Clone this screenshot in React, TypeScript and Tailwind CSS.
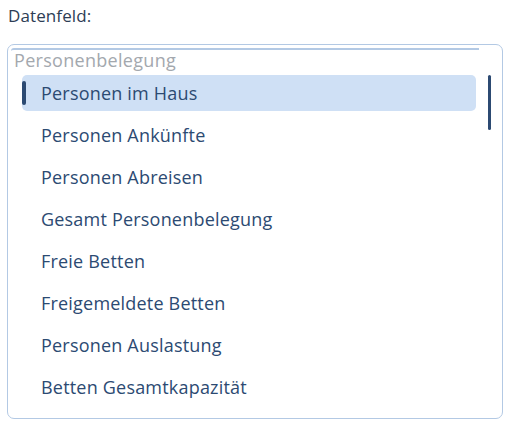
import React, { useState } from 'react';

const fields = [
  'Personen im Haus',
  'Personen Ankünfte',
  'Personen Abreisen',
  'Gesamt Personenbelegung',
  'Freie Betten',
  'Freigemeldete Betten',
  'Personen Auslastung',
  'Betten Gesamtkapazität',
];

const App: React.FC = () => {
  const [selected, setSelected] = useState<string>(fields[0]);

  return (
    <div className="w-[510px] h-[425px] bg-white pt-[4px] pl-[7px] font-['Open_Sans',sans-serif] text-[#2c4a72]">
      <div className="text-[17px] leading-[24px] pl-[1px] tracking-[0.1px] text-[#2d3d55]">Datenfeld:</div>

      {/* List box */}
      <div className="relative mt-[16px] w-[496px] h-[375px] border border-[#b3c9e4] rounded-[7px] pl-[3px] pt-[3px] overflow-hidden">
        <div className="w-[468px] border-t-2 border-[#b3c9e4] rounded-tl-[3px]">
          <div className="pl-[3px] text-[18px] leading-[20px] tracking-[0.3px] text-[#a3a8ae]">Personenbelegung</div>
          <div className="flex flex-col gap-[6px] pl-[11px] pt-[5px]">
            {fields.map((field) => {
              const active = field === selected;
              return (
                <button
                  key={field}
                  onClick={() => setSelected(field)}
                  className={`relative flex items-center w-[454px] h-[36px] rounded-[5px] pl-[19px] text-left text-[18px] tracking-[0.2px] ${
                    active ? 'bg-[#cfe0f5]' : 'bg-transparent'
                  }`}
                >
                  {active && (
                    <span className="absolute left-0 top-[6px] w-[4px] h-[24px] rounded-[2px] bg-[#2c4a72]" />
                  )}
                  {field}
                </button>
              );
            })}
          </div>
        </div>

        {/* Scrollbar thumb */}
        <div className="absolute left-[480px] top-[30px] w-[3px] h-[55px] rounded-full bg-[#2c4a72]" />
      </div>
    </div>
  );
};

export default App;
